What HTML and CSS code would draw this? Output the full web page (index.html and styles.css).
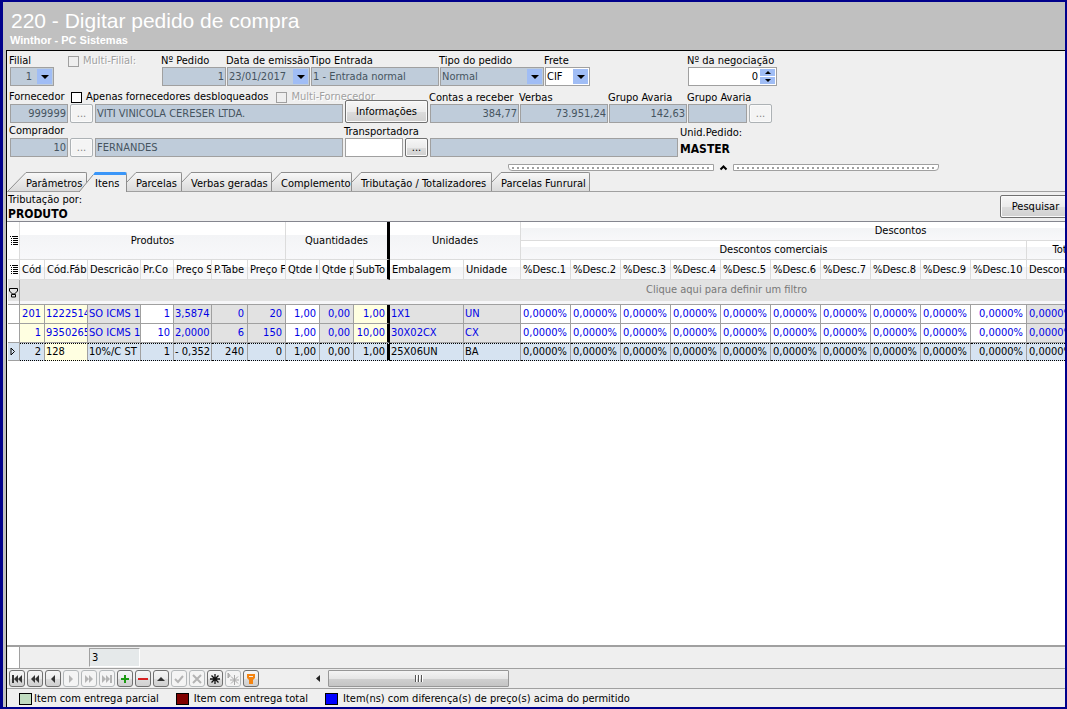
FILE: index.html
```
<!DOCTYPE html>
<html lang="pt-BR">

<head>
    <meta charset="UTF-8">
    <meta name="viewport" content="width=device-width, initial-scale=1.0">
    <title>220 - Digitar pedido de compra</title>
    <link rel="stylesheet" href="styles.css">
</head>

<body>
    <div class="window">
        <header class="titlebar">
            <h1>220 - Digitar pedido de compra</h1>
            <p>Winthor - PC Sistemas</p>
        </header>

        <main class="panel">
            <!-- cabecalho do pedido -->
            <form class="pedido">
                <div class="row">
                    <div class="field w-filial">
                        <label for="filial">Filial</label>
                        <div class="combo off">
                            <select id="filial" class="num"><option>1</option></select>
                            <span class="arrow"></span>
                        </div>
                    </div>
                    <div class="check off multi-filial">
                        <input type="checkbox" id="multiFilial" disabled>
                        <label for="multiFilial">Multi-Filial:</label>
                    </div>
                    <div class="field w-pedido">
                        <label for="numPedido">Nº Pedido</label>
                        <input id="numPedido" class="off num" value="1" readonly>
                    </div>
                    <div class="field w-data">
                        <label for="data">Data de emissão</label>
                        <div class="combo off">
                            <select id="data"><option>23/01/2017</option></select>
                            <span class="arrow"></span>
                        </div>
                    </div>
                    <div class="field w-entrada">
                        <label for="entrada">Tipo Entrada</label>
                        <input id="entrada" class="off" value="1 - Entrada normal" readonly>
                    </div>
                    <div class="field w-tipo">
                        <label for="tipo">Tipo do pedido</label>
                        <div class="combo off">
                            <select id="tipo"><option>Normal</option></select>
                            <span class="arrow"></span>
                        </div>
                    </div>
                    <div class="field w-frete">
                        <label for="frete">Frete</label>
                        <div class="combo">
                            <select id="frete"><option>CIF</option></select>
                            <span class="arrow"></span>
                        </div>
                    </div>
                    <div class="field w-neg">
                        <label for="negociacao">Nº da negociação</label>
                        <div class="combo">
                            <input id="negociacao" class="num" value="0">
                            <span class="spin">
                                <button type="button" class="up" aria-label="Aumentar"></button>
                                <button type="button" class="down" aria-label="Diminuir"></button>
                            </span>
                        </div>
                    </div>
                </div>

                <div class="row row-forn">
                    <div class="left-block">
                        <div class="labels">
                            <label for="fornecedor" class="first">Fornecedor</label>
                            <div class="check">
                                <input type="checkbox" id="desbloq">
                                <label for="desbloq">Apenas fornecedores desbloqueados</label>
                            </div>
                            <div class="check off">
                                <input type="checkbox" id="multiForn" disabled>
                                <label for="multiForn">Multi-Fornecedor</label>
                            </div>
                        </div>
                        <div class="controls">
                            <input id="fornecedor" class="off num code" value="999999" readonly>
                            <button type="button" class="dots" disabled>...</button>
                            <input class="off name" aria-label="Nome do fornecedor" value="VITI VINICOLA CERESER LTDA." readonly>
                        </div>
                    </div>
                    <button type="button" class="btn info">Informações</button>
                    <div class="field w-contas">
                        <label for="contas">Contas a receber</label>
                        <input id="contas" class="off num" value="384,77" readonly>
                    </div>
                    <div class="field w-verbas">
                        <label for="verbas">Verbas</label>
                        <input id="verbas" class="off num" value="73.951,24" readonly>
                    </div>
                    <div class="field w-avaria">
                        <label for="avaria">Grupo Avaria</label>
                        <input id="avaria" class="off num" value="142,63" readonly>
                    </div>
                    <div class="field w-avaria2">
                        <label for="avaria2">Grupo Avaria</label>
                        <input id="avaria2" class="off" readonly>
                    </div>
                    <button type="button" class="dots" disabled>...</button>
                </div>

                <div class="row row-comp">
                    <div class="left-block">
                        <div class="labels">
                            <label for="comprador" class="first">Comprador</label>
                        </div>
                        <div class="controls">
                            <input id="comprador" class="off num code" value="10" readonly>
                            <button type="button" class="dots" disabled>...</button>
                            <input class="off name" aria-label="Nome do comprador" value="FERNANDES" readonly>
                        </div>
                    </div>
                    <div class="field w-transp">
                        <label for="transp">Transportadora</label>
                        <input id="transp">
                    </div>
                    <button type="button" class="dots">...</button>
                    <input class="off transp-nome" aria-label="Nome da transportadora" readonly>
                    <div class="unid">
                        <span>Unid.Pedido:</span>
                        <strong>MASTER</strong>
                    </div>
                </div>
            </form>

            <div class="splitter">
                <span class="grip grip-left"></span>
                <svg width="19" height="7" viewBox="0 0 19 7"><path d="M6.5 5.5 9.5 2.5 12.5 5.5" fill="none" stroke="#000" stroke-width="2"/></svg>
                <span class="grip grip-right"></span>
            </div>

            <!-- abas -->
            <nav class="tabs">
                <button class="tab t-param">
                    <svg width="18" height="19" viewBox="0 0 18 19">
                        <defs>
                            <linearGradient id="tabFill" x1="0" y1="0" x2="0" y2="1">
                                <stop offset="0" stop-color="#f8f8f8"/>
                                <stop offset="1" stop-color="#dadada"/>
                            </linearGradient>
                        </defs>
                        <path d="M0 19 18 0V19z" fill="url(#tabFill)"/><path d="M0 19 18 .5" fill="none" stroke="#8e8e8e"/>
                    </svg>
                    <span>Parâmetros</span>
                </button>
                <button class="tab t-itens active">
                    <svg width="16" height="20" viewBox="0 0 16 20"><path d="M0 20 16 0V20z" fill="#efefef"/><path d="M0 20 14 3" fill="none" stroke="#8e8e8e"/><path d="M14 3 16 0V3z" fill="#3a96f8"/></svg>
                    <span>Itens</span>
                </button>
                <button class="tab t-parc">
                    <svg width="9" height="19" viewBox="0 0 9 19"><path d="M0 19V10L9 0V19z" fill="url(#tabFill)"/><path d="M0 10 9 .5" fill="none" stroke="#8e8e8e"/></svg>
                    <span>Parcelas</span>
                </button>
                <button class="tab t-verbas">
                    <svg width="9" height="19" viewBox="0 0 9 19"><path d="M0 19V10L9 0V19z" fill="url(#tabFill)"/><path d="M0 10 9 .5" fill="none" stroke="#8e8e8e"/></svg>
                    <span>Verbas geradas</span>
                </button>
                <button class="tab t-comp">
                    <svg width="9" height="19" viewBox="0 0 9 19"><path d="M0 19V10L9 0V19z" fill="url(#tabFill)"/><path d="M0 10 9 .5" fill="none" stroke="#8e8e8e"/></svg>
                    <span>Complemento</span>
                </button>
                <button class="tab t-trib">
                    <svg width="9" height="19" viewBox="0 0 9 19"><path d="M0 19V10L9 0V19z" fill="url(#tabFill)"/><path d="M0 10 9 .5" fill="none" stroke="#8e8e8e"/></svg>
                    <span>Tributação / Totalizadores</span>
                </button>
                <button class="tab t-fun">
                    <svg width="9" height="19" viewBox="0 0 9 19"><path d="M0 19V10L9 0V19z" fill="url(#tabFill)"/><path d="M0 10 9 .5" fill="none" stroke="#8e8e8e"/></svg>
                    <span>Parcelas Funrural</span>
                </button>
            </nav>

            <div class="subbar">
                <div class="trib">
                    <span>Tributação por:</span>
                    <strong>PRODUTO</strong>
                </div>
                <button class="btn search">Pesquisar</button>
            </div>

            <!-- itens do pedido -->
            <div class="grid">
                <table>
                    <colgroup>
                        <col class="c12"><col class="c25"><col class="c43"><col class="c53"><col class="c33"><col class="c38">
                        <col class="c36"><col class="c38"><col class="c34"><col class="c34"><col class="c36"><col class="c74">
                        <col class="c57"><col class="c50" span="9"><col class="c56"><col class="c50"><col class="c30">
                        <col class="c174"><col class="c153">
                    </colgroup>
                    <thead>
                        <tr class="band">
                            <th rowspan="2" class="ind"><svg width="9" height="9" viewBox="0 0 9 9"><path d="M0 .5H1M2 .5H8M1 2.5H2M3 2.5H8M1 4.5H2M3 4.5H8M1 6.5H2M3 6.5H8M1 8.5H2M3 8.5H8" stroke="#000"/></svg></th>
                            <th colspan="7" rowspan="2">Produtos</th>
                            <th colspan="3" rowspan="2" class="fix">Quantidades</th>
                            <th colspan="2" rowspan="2">Unidades</th>
                            <th colspan="13">Descontos</th>
                            <th rowspan="2"></th>
                        </tr>
                        <tr class="band">
                            <th colspan="10">Descontos comerciais</th>
                            <th colspan="2">Totais</th>
                            <th></th>
                        </tr>
                        <tr class="cols">
                            <th class="ind"><svg width="9" height="9" viewBox="0 0 9 9"><path d="M0 .5H1M2 .5H8M1 2.5H2M3 2.5H8M1 4.5H2M3 4.5H8M1 6.5H2M3 6.5H8M1 8.5H2M3 8.5H8" stroke="#000"/></svg></th>
                            <th>Cód</th>
                            <th>Cód.Fáb</th>
                            <th>Descricão</th>
                            <th>Pr.Co</th>
                            <th>Preço S</th>
                            <th>P.Tabe</th>
                            <th>Preço F</th>
                            <th>Qtde I</th>
                            <th>Qtde p</th>
                            <th class="fix">SubTo</th>
                            <th>Embalagem</th>
                            <th>Unidade</th>
                            <th>%Desc.1</th>
                            <th>%Desc.2</th>
                            <th>%Desc.3</th>
                            <th>%Desc.4</th>
                            <th>%Desc.5</th>
                            <th>%Desc.6</th>
                            <th>%Desc.7</th>
                            <th>%Desc.8</th>
                            <th>%Desc.9</th>
                            <th>%Desc.10</th>
                            <th>Descon</th>
                            <th></th>
                            <th></th>
                            <th></th>
                        </tr>
                    </thead>
                    <tbody>
                        <tr class="filter">
                            <td class="ind"><svg width="9" height="10" viewBox="0 0 9 10"><path d="M.5.5H8.500V3L5.500 6H3.500L.5 3zM2.500 6.500H6.500V9H2.500z" fill="none" stroke="#000"/></svg></td>
                            <td colspan="26">Clique aqui para definir um filtro</td>
                        </tr>
                        <tr>
                            <td class="ind"></td>
                            <td class="n y">201</td>
                            <td class="y">1222514</td>
                            <td>SO ICMS 1</td>
                            <td class="n w">1</td>
                            <td>3,5874</td>
                            <td class="n">0</td>
                            <td class="n">20</td>
                            <td class="n w">1,00</td>
                            <td class="n">0,00</td>
                            <td class="n y fix">1,00</td>
                            <td>1X1</td>
                            <td>UN</td>
                            <td class="n w">0,0000%</td>
                            <td class="n w">0,0000%</td>
                            <td class="n w">0,0000%</td>
                            <td class="n w">0,0000%</td>
                            <td class="n w">0,0000%</td>
                            <td class="n w">0,0000%</td>
                            <td class="n w">0,0000%</td>
                            <td class="n w">0,0000%</td>
                            <td class="n w">0,0000%</td>
                            <td class="n w">0,0000%</td>
                            <td class="n">0,0000%</td>
                            <td></td>
                            <td></td>
                            <td></td>
                        </tr>
                        <tr>
                            <td class="ind"></td>
                            <td class="n y">1</td>
                            <td class="y">9350265</td>
                            <td>SO ICMS 1</td>
                            <td class="n w">10</td>
                            <td>2,0000</td>
                            <td class="n">6</td>
                            <td class="n">150</td>
                            <td class="n w">1,00</td>
                            <td class="n">0,00</td>
                            <td class="n y fix">10,00</td>
                            <td>30X02CX</td>
                            <td>CX</td>
                            <td class="n w">0,0000%</td>
                            <td class="n w">0,0000%</td>
                            <td class="n w">0,0000%</td>
                            <td class="n w">0,0000%</td>
                            <td class="n w">0,0000%</td>
                            <td class="n w">0,0000%</td>
                            <td class="n w">0,0000%</td>
                            <td class="n w">0,0000%</td>
                            <td class="n w">0,0000%</td>
                            <td class="n w">0,0000%</td>
                            <td class="n">0,0000%</td>
                            <td></td>
                            <td></td>
                            <td></td>
                        </tr>
                        <tr class="selected">
                            <td class="ind"><svg width="6" height="9" viewBox="0 0 6 9"><path d="M1 1 4.500 4.500 1 8z" fill="none" stroke="#000"/></svg></td>
                            <td class="n">2</td>
                            <td class="y">128</td>
                            <td>10%/C ST</td>
                            <td class="n">1</td>
                            <td>- 0,352</td>
                            <td class="n">240</td>
                            <td class="n">0</td>
                            <td class="n">1,00</td>
                            <td class="n">0,00</td>
                            <td class="n fix">1,00</td>
                            <td>25X06UN</td>
                            <td>BA</td>
                            <td class="n">0,0000%</td>
                            <td class="n">0,0000%</td>
                            <td class="n">0,0000%</td>
                            <td class="n">0,0000%</td>
                            <td class="n">0,0000%</td>
                            <td class="n">0,0000%</td>
                            <td class="n">0,0000%</td>
                            <td class="n">0,0000%</td>
                            <td class="n">0,0000%</td>
                            <td class="n">0,0000%</td>
                            <td class="n">0,0000%</td>
                            <td></td>
                            <td></td>
                            <td></td>
                        </tr>
                    </tbody>
                </table>
            </div>

            <div class="summary">
                <span class="blank"></span>
                <output>3</output>
            </div>

            <div class="navigator">
                <div class="nav-buttons">
                    <button aria-label="Primeiro"><svg viewBox="0 0 12 12"><path d="M1 2H3V10H1zM7 2V10L3 6zM11 2V10L7 6z"/></svg></button>
                    <button aria-label="Página anterior"><svg viewBox="0 0 12 12"><path d="M6 2V10L2 6zM10 2V10L6 6z"/></svg></button>
                    <button aria-label="Anterior"><svg viewBox="0 0 12 12"><path d="M8 2V10L4 6z"/></svg></button>
                    <button aria-label="Próximo" disabled><svg viewBox="0 0 12 12"><path d="M4 2V10L8 6z"/></svg></button>
                    <button aria-label="Próxima página" disabled><svg viewBox="0 0 12 12"><path d="M2 2V10L6 6zM6 2V10L10 6z"/></svg></button>
                    <button aria-label="Último" disabled><svg viewBox="0 0 12 12"><path d="M1 2V10L5 6zM5 2V10L9 6zM9 2H11V10H9z"/></svg></button>
                    <button aria-label="Inserir"><svg viewBox="0 0 12 12"><path d="M5 2H7V5H10V7H7V10H5V7H2V5H5z" fill="#1d9a12"/></svg></button>
                    <button aria-label="Excluir"><svg viewBox="0 0 12 12"><path d="M1 5H11V7H1z" fill="#d62222"/></svg></button>
                    <button aria-label="Editar"><svg viewBox="0 0 12 12"><path d="M2 8 6 4 10 8z"/></svg></button>
                    <button aria-label="Gravar" disabled><svg viewBox="0 0 12 12"><path d="M2 6 5 9 10 3" fill="none" stroke="#b4b4b4" stroke-width="2"/></svg></button>
                    <button aria-label="Cancelar" disabled><svg viewBox="0 0 12 12"><path d="M2 2 10 10M10 2 2 10" stroke="#b4b4b4" stroke-width="2"/></svg></button>
                    <button aria-label="Marcar"><svg viewBox="0 0 12 12"><path d="M6 1V11M1 6H11M2.500 2.500 9.500 9.500M9.500 2.500 2.500 9.500" stroke="#111" stroke-width="1.300"/></svg></button>
                    <button aria-label="Ir para marca" disabled><svg viewBox="0 0 12 12"><path d="M1 0V5L3 2.500zM7.500 2V12M3 7H12M4 3.500 11 10.500M11 3.500 4 10.500" stroke="#a8a8a8"/></svg></button>
                    <button aria-label="Filtrar"><svg viewBox="0 0 12 12"><path d="M2 1H10V5L8 7V11H4V7L2 5zM4 3V4H8V3z" fill="#f58410" fill-rule="evenodd"/></svg></button>
                </div>
                <div class="scrollbar">
                    <svg width="18" height="17" viewBox="0 0 18 17"><path d="M10 5V12L6 8.500z" fill="#222"/></svg>
                    <span class="thumb"><i></i><i></i><i></i></span>
                </div>
            </div>

            <footer class="legend">
                <span class="item parcial"><i></i>Item com entrega parcial</span>
                <span class="item total"><i></i>Item com entrega total</span>
                <span class="item preco"><i></i>Item(ns) com diferença(s) de preço(s) acima do permitido</span>
            </footer>
        </main>
    </div>
</body>

</html>
```
FILE: styles.css
```
* {
    box-sizing: border-box;
    margin: 0;
    padding: 0;
}

body {
    height: 100vh;
    overflow: hidden;
    font-family: "DejaVu Sans Condensed", "DejaVu Sans", sans-serif;
    font-size: 11px;
    line-height: 14px;
    color: #000;
}

input,
select,
button {
    font: inherit;
    color: inherit;
}

svg {
    display: block;
    flex: none;
}

.window {
    height: 100%;
    display: flex;
    flex-direction: column;
    border: 2px solid #00008b;
    border-left-width: 3px;
    background-color: #c0c0c0;
    overflow: hidden;
}

/* titulo */
.titlebar {
    height: 48px;
    padding: 7px 7px 0;
    font-family: "Liberation Sans", Arial, sans-serif;
    color: #fff;
}

.titlebar h1 {
    font-size: 21px;
    line-height: 24px;
    font-weight: normal;
    padding-left: 1px;
}

.titlebar p {
    font-size: 11px;
    line-height: 14px;
    font-weight: bold;
}

.panel {
    flex: 1;
    min-height: 0;
    display: flex;
    flex-direction: column;
    margin-left: 3px;
    border-top: 1px solid #000;
    border-left: 1px solid #000;
    background-color: #efefef;
}

/* formulario */
.pedido {
    padding: 3px 0 0 2px;
}

.row {
    display: flex;
    align-items: flex-end;
}

.row-forn {
    height: 37px;
}

.row-comp {
    height: 34px;
}

.field {
    flex: none;
    white-space: nowrap;
}

.field label {
    display: block;
    height: 13px;
}

.pedido input:not([type="checkbox"]),
.combo {
    height: 19px;
    border: 1px solid #a0a0a0;
    background-color: #fff;
    padding: 0 1px;
    min-width: 0;
}

.field > input,
.field .combo {
    display: block;
    width: calc(100% - 1px);
    margin-left: 1px;
}

.pedido input.off,
.combo.off {
    background-color: #bfccda;
    color: #46545f;
}

.pedido .num {
    text-align: right;
}

.field .combo {
    display: flex;
    align-items: center;
    padding: 0 1px 0 0;
}

.combo select,
.pedido .combo input {
    flex: 1;
    min-width: 0;
    height: 17px;
    border: 0;
    padding: 0 2px 0 1px;
    background: none;
    appearance: none;
}

.combo select.num {
    padding-right: 5px;
}

.arrow {
    flex: none;
    width: 15px;
    height: 15px;
    display: flex;
    align-items: center;
    justify-content: center;
    background-color: #a0bdf5;
    pointer-events: none;
}

.arrow::after {
    content: "";
    border: 4px solid transparent;
    border-top-color: #000;
    border-bottom: 0;
}

.spin {
    display: flex;
    flex-direction: column;
    gap: 1px;
}

.spin button {
    width: 15px;
    height: 7px;
    border: 0;
    display: flex;
    align-items: center;
    justify-content: center;
    background-color: #a0bdf5;
}

.spin button::after {
    content: "";
    border: 3px solid transparent;
}

.spin .up::after {
    border-top: 0;
    border-bottom-color: #000;
}

.spin .down::after {
    border-bottom: 0;
    border-top-color: #000;
}

.w-filial { width: 45px; }
.w-pedido { width: 65px; }
.w-data { width: 84px; }
.w-entrada { width: 129px; }
.w-tipo { width: 105px; }
.w-frete { width: 46px; }
.w-neg { width: 90px; margin-left: 97px; }
.w-contas { width: 90px; }
.w-verbas { width: 89px; }
.w-avaria { width: 79px; }
.w-avaria2 { width: 60px; }
.w-transp { width: 59px; margin-left: 1px; }

.check {
    display: flex;
    align-items: center;
    gap: 4px;
    white-space: nowrap;
}

.check input {
    appearance: none;
    width: 11px;
    height: 11px;
    border: 1px solid #000;
    background-color: #fff;
}

.check.off {
    color: #a0a0a0;
    text-shadow: 1px 1px 0 #fff;
}

.check.off input {
    border-color: #a0a0a0;
    background-color: #efefef;
}

.multi-filial {
    width: 93px;
    margin-left: 14px;
    align-self: flex-start;
}

.left-block {
    width: 334px;
    flex: none;
}

.labels {
    display: flex;
    white-space: nowrap;
    height: 14px;
    gap: 8px;
}

.labels .first {
    width: 54px;
}

.controls {
    display: flex;
    gap: 2px;
    padding-left: 1px;
}

.code {
    width: 58px;
}

.name {
    flex: 1;
}

.btn,
.dots {
    flex: none;
    border: 1px solid #707070;
    border-radius: 2px;
    background: linear-gradient(#f6f6f6, #ebebeb 50%, #dcdcdc 51%, #d0d0d0);
    box-shadow: inset 0 0 0 1px #fafafa;
    text-align: center;
}

.dots {
    width: 23px;
    height: 19px;
}

.dots:disabled {
    border-color: #adb2b5;
    background: #f4f4f4;
    color: #838383;
}

.info {
    width: 83px;
    height: 23px;
    margin: 0 1px 0 2px;
}

.w-avaria2 + .dots,
.w-transp + .dots {
    margin: 0 1px 0 2px;
}

.transp-nome {
    width: 248px;
    margin: 0 2px 0 1px;
}

.unid,
.trib {
    white-space: nowrap;
}

.unid span,
.unid strong,
.trib span,
.trib strong {
    display: block;
}

.unid {
    line-height: 16px;
}

.unid strong,
.trib strong {
    font-size: 12px;
}

.splitter {
    height: 15px;
    padding: 7px 0 0 501px;
    display: flex;
}

.grip {
    width: 206px;
    height: 7px;
    border: 1px solid #a0a0a0;
    background: repeating-linear-gradient(90deg, #a0a0a0 0 2px, #fff 2px 5px) content-box, #fff;
    padding: 2px 3px 1px;
}

.grip-left { border-bottom-left-radius: 4px; }
.grip-right { border-bottom-right-radius: 4px; }

/* abas */
.tabs {
    display: flex;
    height: 20px;
    padding-left: 1px;
    border-bottom: 1px solid #a0a0a0;
}

.tab {
    display: flex;
    flex: none;
    height: 19px;
    border: 0;
    background: none;
}

.tab span {
    flex: 1;
    height: 19px;
    padding-top: 4px;
    border-top: 1px solid #8e8e8e;
    border-right: 1px solid #8e8e8e;
    border-top-right-radius: 2px;
    background: linear-gradient(#f8f8f8, #dadada);
    text-align: left;
    white-space: nowrap;
}

.tab.active {
    position: relative;
    height: 20px;
    margin-left: -8px;
}

.tab.active span {
    height: 20px;
    padding-top: 2px;
    border-top: 3px solid #3a96f8;
    background: #efefef;
}

.t-param { width: 79px; }
.t-itens { width: 48px; }
.t-parc { width: 55px; }
.t-verbas { width: 90px; }
.t-comp { width: 80px; }
.t-trib { width: 140px; }
.t-fun { width: 98px; }

.subbar {
    display: flex;
    justify-content: space-between;
    height: 29px;
    padding: 1px 0 0 1px;
}

.search {
    width: 73px;
    height: 23px;
    margin: 2px -8px 0 0;
    padding-right: 2px;
}

/* tabela */
.grid {
    flex: 1;
    min-height: 0;
    overflow: hidden;
    border-top: 1px solid #85868f;
    padding-left: 1px;
    background-color: #fff;
}

table {
    table-layout: fixed;
    width: 1426px;
    border-collapse: separate;
    border-spacing: 0;
}

.c12 { width: 12px; }
.c25 { width: 25px; }
.c30 { width: 30px; }
.c33 { width: 33px; }
.c34 { width: 34px; }
.c36 { width: 36px; }
.c38 { width: 38px; }
.c43 { width: 43px; }
.c50 { width: 50px; }
.c53 { width: 53px; }
.c56 { width: 56px; }
.c57 { width: 57px; }
.c74 { width: 74px; }
.c153 { width: 153px; }
.c174 { width: 174px; }

th,
td {
    height: 19px;
    overflow: hidden;
    white-space: nowrap;
    border-right: 1px solid #a0a0a0;
    border-bottom: 1px solid #a0a0a0;
}

th {
    font-weight: normal;
    border-color: #dcdcdc;
    background: linear-gradient(#fff 35%, #f3f4f6 36%, #f8f8fa);
}

.cols th {
    height: 20px;
    padding-left: 2px;
    text-align: left;
}

td {
    padding: 0 2px 0 1px;
    color: #0000e6;
    background-color: #e2e2e2;
}

td.n {
    text-align: right;
    padding: 0 3px 0 0;
}

td.y {
    background-color: #ffffe1;
}

td.w {
    background-color: #fff;
}

th.fix,
td.fix {
    border-right: 3px solid #000;
}

td.fix {
    padding-right: 2px;
}

tr .ind {
    padding: 0 0 0 2px;
    background: #fff;
}

.filter td {
    height: 25px;
    color: #787878;
    text-align: center;
    border-right: 0;
    background: linear-gradient(#e2e2e2 21px, #f6f6f8 21px);
    padding-bottom: 4px;
}

.filter .ind {
    border-right: 1px solid #a0a0a0;
    padding: 2px 0 0 1px;
}

.selected td {
    height: 18px;
    color: #000;
    background-color: #d6e3f1;
    border-top: 1px dotted #000;
    border-bottom: 1px dotted #000;
}

.selected td.y {
    background-color: #ffffe1;
}

.selected .ind {
    border-top: 0;
    border-bottom: 1px solid #a0a0a0;
}

/* rodape */
.summary {
    height: 24px;
    display: flex;
    border-top: 2px solid #a0a0a0;
    border-bottom: 1px solid #a0a0a0;
    padding-left: 1px;
}

.summary .blank {
    width: 12px;
    border-right: 1px solid #a0a0a0;
    background-color: #fff;
}

.summary output {
    width: 51px;
    height: 19px;
    margin: 1px 0 0 69px;
    padding: 2px;
    border: 1px solid #fff;
    border-top-color: #a0a0a0;
    border-left-color: #a0a0a0;
    background-color: #e5e9ea;
}

.navigator {
    display: flex;
    height: 20px;
    border-bottom: 1px solid #a0a0a0;
}

.nav-buttons {
    display: flex;
    gap: 2px;
    padding: 1px 51px 0 2px;
}

.nav-buttons button {
    width: 16px;
    height: 17px;
    padding: 1px;
    border: 1px solid #707070;
    border-radius: 3px;
    background: linear-gradient(#f6f6f6, #ebebeb 50%, #dcdcdc 51%, #d0d0d0);
}

.nav-buttons button:disabled {
    border-color: #b4b8ba;
    background: #f4f4f4;
}

.nav-buttons svg {
    width: 12px;
    height: 12px;
    fill: #333;
}

.nav-buttons button:disabled svg {
    fill: #b4b4b4;
}

.scrollbar {
    flex: 1;
    display: flex;
    padding-top: 1px;
    background-color: #ebebeb;
}

.thumb {
    width: 181px;
    height: 17px;
    display: flex;
    align-items: center;
    justify-content: center;
    gap: 1px;
    border: 1px solid #979797;
    border-radius: 1px;
    background: linear-gradient(#f4f4f4, #e6e6e6 50%, #d0d0d0 51%, #c4c4c4);
}

.thumb i {
    width: 2px;
    height: 7px;
    border-left: 1px solid #555;
    border-right: 1px solid #fff;
}

.legend {
    display: flex;
    align-items: center;
    gap: 17px;
    height: 18px;
    padding: 1px 0 0 12px;
    white-space: nowrap;
}

.item {
    display: flex;
    align-items: center;
    gap: 2px;
}

.item i {
    width: 13px;
    height: 12px;
    border: 1px solid #000;
}

.total,
.preco {
    gap: 5px;
}

.parcial i { background-color: #c0dcc0; }
.total i { background-color: #800000; }
.preco i { background-color: #0000ff; }
```
